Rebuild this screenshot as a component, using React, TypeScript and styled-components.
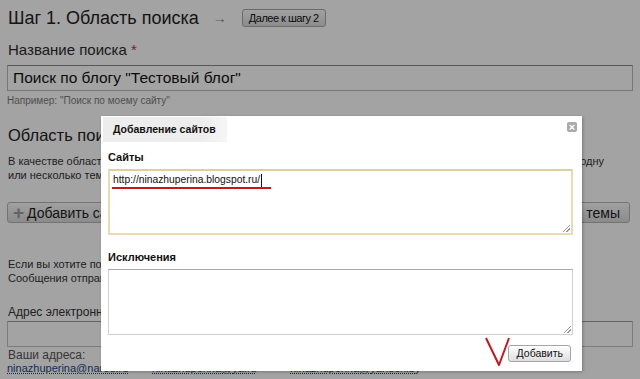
import styled, { createGlobalStyle } from "styled-components";

const Global = createGlobalStyle`
  html, body {
    margin: 0;
    padding: 0;
    background: #fff;
  }
  body {
    font-family: "Liberation Sans", Arial, sans-serif;
    color: #2b2b2b;
  }
`;

const App = () => {
  return (
    <Screen>
      <Global />
      <Page>
        <StepRow>
          <Heading>Шаг 1. Область поиска</Heading>
          <Arrow>→</Arrow>
          <GrayButton>Далее к шагу 2</GrayButton>
        </StepRow>

        <Label>
          Название поиска <Star>*</Star>
        </Label>
        <BigInput>Поиск по блогу "Тестовый блог"</BigInput>
        <Hint>Например: "Поиск по моему сайту"</Hint>

        <SubHeading>Область поиска</SubHeading>
        <Para>
          <Line>В качестве области поиска вы можете указать один или несколько сайтов, отдельные разделы и страницы или одну</Line>
          <Line>или несколько тем, с которыми связан ваш сайт.</Line>
        </Para>

        <ButtonRow>
          <AddButton>
            <Plus>+</Plus>Добавить сайты
          </AddButton>
          <AddButton>
            <Plus>+</Plus>Выбрать готовые темы
          </AddButton>
        </ButtonRow>

        <Para $top={34}>
          <Line>Если вы хотите получать уведомления об изменениях в работе поиска, укажите адрес электронной почты.</Line>
          <Line>Сообщения отправляются не чаще одного раза в неделю.</Line>
        </Para>

        <MailLabel>Адрес электронной почты</MailLabel>
        <MailInput />
        <Small>Ваши адреса:</Small>
        <Links>
          <MailLink $width={145}>ninazhuperina@narod.ru</MailLink>
          <MailLink $width={138}>ninazhuperina@ya.ru</MailLink>
          <MailLink>ninazhuperina@yandex.by</MailLink>
        </Links>
      </Page>

      <Shade />

      <Dialog>
        <TabRow>
          <Tab>Добавление сайтов</Tab>
          <Close>×</Close>
        </TabRow>
        <DialogBody>
          <FieldLabel>Сайты</FieldLabel>
          <Area $focused>
            <AreaText>
              http://ninazhuperina.blogspot.ru/<Caret />
            </AreaText>
            <Underline />
            <Grip />
          </Area>

          <FieldLabel $top={15}>Исключения</FieldLabel>
          <Area>
            <Grip />
          </Area>

          <Footer>
            <Check viewBox="0 0 26 30" width="26" height="30">
              <path d="M1 1 L14 28 L24 1" fill="none" stroke="#c8161d" strokeWidth="2" strokeLinejoin="round" />
            </Check>
            <SubmitButton>Добавить</SubmitButton>
          </Footer>
        </DialogBody>
      </Dialog>
    </Screen>
  );
};

export default App;

const Screen = styled.div`
  position: relative;
  width: 640px;
  height: 379px;
  overflow: hidden;
  background: #fff;
`;

const Page = styled.div`
  padding: 5px 7px 0 7px;
`;

const StepRow = styled.div`
  display: flex;
  align-items: center;
  height: 26px;
`;

const Heading = styled.div`
  font-size: 18px;
  color: #222;
  padding-left: 1px;
`;

const Arrow = styled.span`
  font-size: 14px;
  color: #8a8a8a;
  margin: 0 15px 0 14px;
`;

const GrayButton = styled.div`
  height: 16px;
  line-height: 16px;
  padding: 0 6px;
  font-size: 11px;
  letter-spacing: -0.5px;
  color: #111;
  border: 1px solid #a8a8a8;
  border-radius: 3px;
  background: linear-gradient(#fdfdfd, #dcdcdc);
`;

const Label = styled.div`
  font-size: 15px;
  margin-top: 9px;
  padding-left: 1px;
  line-height: 20px;
`;

const Star = styled.span`
  color: #d0322f;
`;

const BigInput = styled.div`
  margin-top: 5px;
  height: 24px;
  line-height: 24px;
  font-size: 15.5px;
  padding-left: 5px;
  border: 1px solid #bcbcbc;
  border-top-color: #888;
  color: #111;
`;

const Hint = styled.div`
  margin-top: 4px;
  font-size: 10px;
  color: #7b7b7b;
`;

const SubHeading = styled.div`
  margin-top: 20px;
  font-size: 16.5px;
  color: #222;
  padding-left: 1px;
`;

const Para = styled.div<{ $top?: number }>`
  margin-top: ${(p) => p.$top ?? 9}px;
  font-size: 11px;
  line-height: 14px;
  color: #333;
  padding-left: 1px;
`;

const Line = styled.div`
  white-space: nowrap;
`;

const ButtonRow = styled.div`
  display: flex;
  justify-content: space-between;
  margin-top: 20px;
  padding-right: 3px;
`;

const AddButton = styled.div`
  display: flex;
  align-items: center;
  height: 19px;
  padding: 0 9px 0 5px;
  font-size: 14px;
  color: #222;
  border: 1px solid #b5b5b5;
  border-radius: 3px;
  background: linear-gradient(#fbfbfb, #dadada);
`;

const Plus = styled.span`
  font-size: 19px;
  font-weight: bold;
  color: #9a9a9a;
  margin-right: 3px;
  line-height: 19px;
`;

const MailLabel = styled.div`
  margin-top: 20px;
  font-size: 12px;
  color: #333;
  padding-left: 1px;
`;

const MailInput = styled.div`
  margin-top: 2px;
  height: 24px;
  border: 1px solid #c4c4c4;
  border-top-color: #999;
`;

const Small = styled.div`
  margin-top: 2px;
  font-size: 12px;
  line-height: 13px;
  color: #555;
  padding-left: 1px;
`;

const Links = styled.div`
  display: flex;
  margin-top: 0;
`;

const MailLink = styled.span<{ $width?: number }>`
  width: ${(p) => (p.$width ? `${p.$width}px` : "auto")};
  flex: none;
  font-size: 11px;
  color: #1f3f8f;
  text-decoration: underline dotted #1f3f8f;
`;

const Shade = styled.div`
  position: absolute;
  inset: 0;
  background: rgba(0, 0, 0, 0.36);
`;

const Dialog = styled.div`
  position: absolute;
  left: 101px;
  top: 116px;
  width: 481px;
  height: 255px;
  background: #fff;
  box-shadow: 1px 1px 3px rgba(0, 0, 0, 0.25);
  padding: 1px 2px 0 2px;
  box-sizing: border-box;
`;

const TabRow = styled.div`
  display: flex;
  justify-content: space-between;
  align-items: flex-start;
`;

const Tab = styled.div`
  width: 114px;
  height: 25px;
  line-height: 25px;
  padding-left: 10px;
  font-size: 10.5px;
  font-weight: bold;
  color: #111;
  background: linear-gradient(90deg, #ededed 80%, #f6f6f6);
`;

const Close = styled.div`
  width: 10px;
  height: 10px;
  margin: 5px 3px 0 0;
  border-radius: 2px;
  background: #a9a9a9;
  color: #fff;
  font-size: 11px;
  font-weight: bold;
  line-height: 10px;
  text-align: center;
`;

const DialogBody = styled.div`
  padding: 0 7px 0 5px;
`;

const FieldLabel = styled.div<{ $top?: number }>`
  margin-top: ${(p) => p.$top ?? 8}px;
  height: 14px;
  line-height: 14px;
  font-size: 11px;
  font-weight: bold;
  color: #111;
`;

const Area = styled.div<{ $focused?: boolean }>`
  position: relative;
  margin-top: 5px;
  height: 62px;
  border: 2px solid ${(p) => (p.$focused ? "#e8dcb2" : "#d0d0d0")};
  border-top-color: ${(p) => (p.$focused ? "#ddd0a0" : "#a8a8a8")};
  border-width: ${(p) => (p.$focused ? "2px" : "1px")};
  padding: ${(p) => (p.$focused ? "0" : "1px")};
`;

const AreaText = styled.div`
  padding: 2px 0 0 3px;
  font-size: 10.3px;
  line-height: 14px;
  color: #111;
  display: flex;
  align-items: center;
`;

const Caret = styled.span`
  display: inline-block;
  width: 1px;
  height: 13px;
  margin-left: 1px;
  background: #111;
`;

const Underline = styled.div`
  position: absolute;
  left: 2px;
  top: 16px;
  width: 159px;
  height: 2px;
  background: #c8161d;
`;

const Grip = styled.div`
  position: absolute;
  right: 1px;
  bottom: 1px;
  width: 7px;
  height: 7px;
  background: linear-gradient(
    135deg,
    transparent 45%,
    #999 45%,
    #999 55%,
    transparent 55%,
    transparent 70%,
    #999 70%,
    #999 80%,
    transparent 80%
  );
`;

const Footer = styled.div`
  display: flex;
  justify-content: flex-end;
  align-items: flex-start;
  margin-top: 10px;
  padding-right: 2px;
`;

const Check = styled.svg`
  margin: -8px -3px 0 0;
`;

const SubmitButton = styled.div`
  height: 15px;
  line-height: 15px;
  padding: 0 7px 0 8px;
  font-size: 10.5px;
  color: #111;
  border: 1px solid #a5a5a5;
  border-radius: 3px;
  background: linear-gradient(#ffffff, #dedede);
`;
